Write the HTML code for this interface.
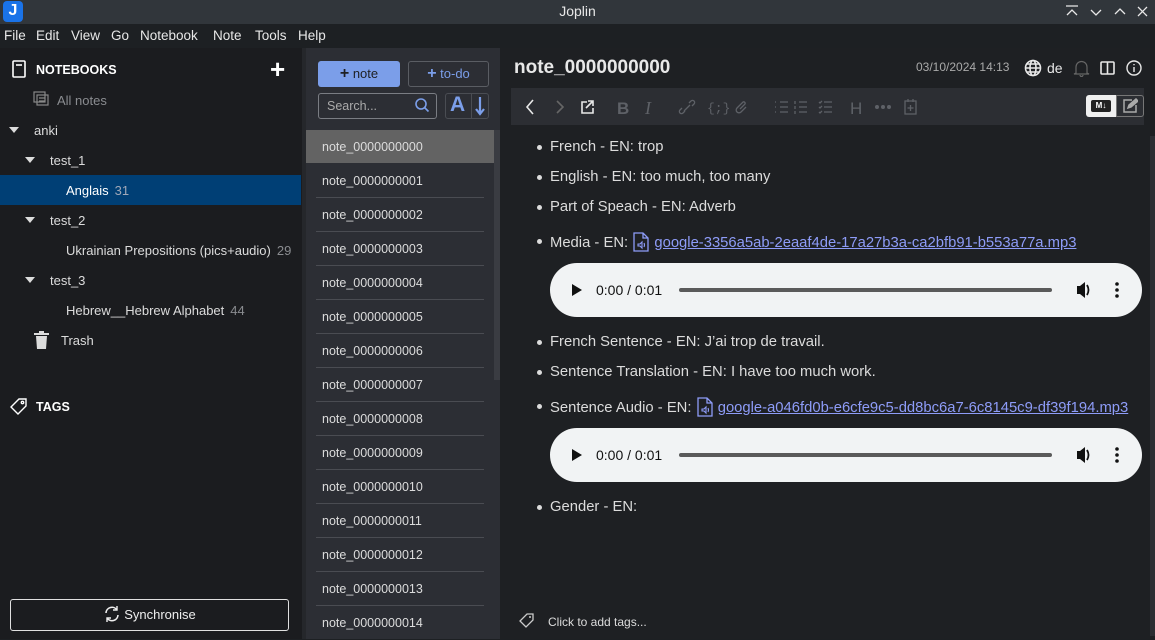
<!DOCTYPE html><html><head><style>
*{box-sizing:border-box;margin:0;padding:0}
body{width:1155px;height:639px;overflow:hidden;background:#1d2023;font-family:"Liberation Sans",sans-serif;position:relative;color:#dcdcdc}
.abs{position:absolute}
#title{left:0;top:0;width:1155px;height:24px;background:#31363b;color:#e8e8e8;font-size:14px;text-align:center;line-height:22px}
#menu{left:0;top:24px;width:1155px;height:24px;background:#1d2023;font-size:13.5px;color:#e8e8e8}
#menu span{position:absolute;top:4px}
#side{left:0;top:48px;width:302px;height:591px;background:#1b1c1f}
#gap{left:302px;top:48px;width:4px;height:591px;background:#25272b}
#list{left:306px;top:48px;width:194px;height:591px;background:#2c2e34}
#ed{left:500px;top:48px;width:655px;height:591px;background:#1e2023}
.si{position:absolute;font-size:13px;color:#dcdcdc}
.cnt{color:#8a8c90;margin-left:6px}
.tri{position:absolute;width:0;height:0;border-left:5px solid transparent;border-right:5px solid transparent;border-top:6px solid #dcdcdc}
.ni{position:absolute;left:10px;width:168px;height:34px;border-bottom:1px solid #4a4c52;font-size:12.5px;color:#dcdcdc;padding:10px 0 0 6px}
.bul{position:absolute;left:550px;font-size:14.8px;color:#dcdcdc;line-height:18px}
.bul:before{content:"";position:absolute;left:-13px;top:7px;width:5px;height:5px;border-radius:50%;background:#dcdcdc}
a{color:#8e9cf8;text-decoration:underline}
.audio{position:absolute;left:550px;width:592px;height:54px;border-radius:27px;background:#f1f3f4}
</style></head><body>
<div id="title" class="abs">Joplin
<div class="abs" style="left:3px;top:1px;width:20px;height:21px;border-radius:4px;background:#1a73e8;color:#fff;font-weight:bold;font-size:16px;line-height:20px">J</div>
<svg class="abs" style="left:1064px;top:4px" width="88" height="16" stroke="#e8e8e8" stroke-width="1.3" fill="none"><path d="M2 2h12M3 11l5-5 5 5"/><path d="M27 6l5 5 5-5"/><path d="M51 10l5-5 5 5"/><path d="M74 3l9 9M83 3l-9 9"/></svg>
</div>
<div id="menu" class="abs"><span style="left:4px">File</span><span style="left:36px">Edit</span><span style="left:71px">View</span><span style="left:111px">Go</span><span style="left:140px">Notebook</span><span style="left:213px">Note</span><span style="left:255px">Tools</span><span style="left:298px">Help</span></div>
<div id="side" class="abs">
<svg class="abs" style="left:12px;top:12px" width="14" height="18" stroke="#fff" stroke-width="1.6" fill="none"><rect x="1" y="1" width="12" height="16" rx="1"/><path d="M4 5h6"/></svg>
<div class="si" style="left:36px;top:15px;font-weight:bold;color:#fff;font-size:12.5px">NOTEBOOKS</div>
<div class="si" style="left:270px;top:6px;font-size:26px;font-weight:bold;color:#fff">+</div>
<svg class="abs" style="left:33px;top:43px" width="16" height="16" stroke="#888" stroke-width="1.2" fill="none"><rect x="1" y="1" width="11" height="10"/><rect x="4" y="4" width="11" height="10"/><path d="M6 7h6M6 10h6"/></svg>
<div class="si" style="left:57px;top:45px;color:#8a8c90">All notes</div>
<div class="tri" style="left:9px;top:79px"></div><div class="si" style="left:34px;top:75px">anki</div>
<div class="tri" style="left:25px;top:109px"></div><div class="si" style="left:50px;top:105px">test_1</div>
<div class="abs" style="left:0;top:127px;width:301px;height:30px;background:#003f75"></div>
<div class="si" style="left:66px;top:135px;color:#fff">Anglais<span class="cnt" style="color:#a0a8b8">31</span></div>
<div class="tri" style="left:25px;top:169px"></div><div class="si" style="left:50px;top:165px">test_2</div>
<div class="si" style="left:66px;top:195px">Ukrainian Prepositions (pics+audio)<span class="cnt">29</span></div>
<div class="tri" style="left:25px;top:229px"></div><div class="si" style="left:50px;top:225px">test_3</div>
<div class="si" style="left:66px;top:255px">Hebrew__Hebrew Alphabet<span class="cnt">44</span></div>
<svg class="abs" style="left:34px;top:283px" width="15" height="18" fill="#dcdcdc"><rect x="0" y="2" width="15" height="2"/><rect x="5" y="0" width="5" height="2"/><path d="M2 5h11l-1 13H3z"/></svg>
<div class="si" style="left:61px;top:285px">Trash</div>
<svg class="abs" style="left:10px;top:349px" width="18" height="18" stroke="#fff" stroke-width="1.4" fill="none"><path d="M9 2h7v7l-8 8-7-7z"/><circle cx="12.5" cy="5.5" r="1.2"/></svg>
<div class="si" style="left:36px;top:352px;font-weight:bold;color:#fff;font-size:12.5px">TAGS</div>
<div class="abs" style="left:10px;top:551px;width:279px;height:32px;border:1px solid #e0e0e0;border-radius:3px;text-align:center;font-size:13px;line-height:30px;color:#eee"><svg width="18" height="18" style="vertical-align:-4px;margin-right:3px" stroke="#eee" stroke-width="1.6" fill="none"><path d="M3 8a6 6 0 0 1 11-3M15 10a6 6 0 0 1-11 3"/><path d="M14 1v4h-4M4 17v-4h4" stroke-width="1.4"/></svg>Synchronise</div>
</div>
<div id="gap" class="abs"></div>
<div id="list" class="abs">
<div class="abs" style="left:12px;top:13px;width:82px;height:26px;background:#7b9ee9;border-radius:3px;color:#1e2023;font-size:13px;text-align:center;line-height:26px"><b style="font-size:16px">+</b> note</div>
<div class="abs" style="left:102px;top:13px;width:81px;height:26px;border:1px solid #5a5d63;border-radius:3px;color:#7b9ee9;font-size:13px;text-align:center;line-height:24px"><b style="font-size:16px">+</b> to-do</div>
<div class="abs" style="left:12px;top:45px;width:119px;height:26px;border:1px solid #7a7d83;border-radius:3px;color:#aaa;font-size:12.5px;padding:5px 8px">Search...</div>
<svg class="abs" style="left:108px;top:49px" width="16" height="16" stroke="#7b9ee9" stroke-width="1.6" fill="none"><circle cx="7" cy="7" r="5"/><path d="M10.5 10.5l4 4"/></svg>
<div class="abs" style="left:139px;top:45px;width:44px;height:26px;border:1px solid #4a4d53;border-radius:3px"></div>
<div class="abs" style="left:144px;top:45px;color:#7b9ee9;font-weight:bold;font-size:21px">A</div>
<div class="abs" style="left:165px;top:45px;width:1px;height:26px;background:#4a4d53"></div>
<svg class="abs" style="left:168px;top:48px" width="12" height="20" stroke="#7b9ee9" stroke-width="2.2" fill="none"><path d="M6 1v17M2 13l4 5 4-5"/></svg>
<div class="abs" style="left:0;top:82px;width:188px;height:33px;background:#636363"></div>
<div class="abs" style="left:188px;top:82px;width:6px;height:250px;background:#3a3c42"></div>
<div class="ni" style="top:82px;border:none">note_0000000000</div>
<div class="ni" style="top:116px">note_0000000001</div>
<div class="ni" style="top:150px">note_0000000002</div>
<div class="ni" style="top:184px">note_0000000003</div>
<div class="ni" style="top:218px">note_0000000004</div>
<div class="ni" style="top:252px">note_0000000005</div>
<div class="ni" style="top:286px">note_0000000006</div>
<div class="ni" style="top:320px">note_0000000007</div>
<div class="ni" style="top:354px">note_0000000008</div>
<div class="ni" style="top:388px">note_0000000009</div>
<div class="ni" style="top:422px">note_0000000010</div>
<div class="ni" style="top:456px">note_0000000011</div>
<div class="ni" style="top:490px">note_0000000012</div>
<div class="ni" style="top:524px">note_0000000013</div>
<div class="ni" style="top:558px;border:none">note_0000000014</div>
</div>
<div id="ed" class="abs">
<div class="abs" style="left:14px;top:9px;font-size:19px;font-weight:bold;color:#e8e8e8">note_0000000000</div>
<div class="abs" style="left:416px;top:12px;font-size:12px;color:#aaa">03/10/2024 14:13</div>
<svg class="abs" style="left:524px;top:11px" width="18" height="18" stroke="#e8e8e8" stroke-width="1.6" fill="none"><circle cx="9" cy="9" r="7.5"/><ellipse cx="9" cy="9" rx="3" ry="7.5"/><path d="M1.5 9h15M3 5h12M3 13h12"/></svg>
<div class="abs" style="left:547px;top:12px;font-size:14px;color:#e8e8e8">de</div>
<svg class="abs" style="left:573px;top:11px" width="17" height="18" stroke="#666" stroke-width="1.2" fill="none"><path d="M3 14V8a5.5 5.5 0 0 1 11 0v6l2 1H1zM7 16a1.5 1.5 0 0 0 3 0"/></svg>
<svg class="abs" style="left:600px;top:13px" width="15" height="14" stroke="#e8e8e8" stroke-width="1.6" fill="none"><rect x="1" y="1" width="13" height="12" rx="1"/><path d="M7.5 1v12"/></svg>
<svg class="abs" style="left:626px;top:12px" width="16" height="16" stroke="#e8e8e8" stroke-width="1.4" fill="none"><circle cx="8" cy="8" r="7"/><path d="M8 7v5M8 4v1.2"/></svg>
<div class="abs" style="left:11px;top:40px;width:633px;height:37px;background:#2c2e33"></div>
<svg class="abs" style="left:24px;top:49px" width="400" height="20" fill="none" stroke-width="1.6"><path d="M9 3L3 10l6 7" stroke="#e8e8e8"/><path d="M33 4l6 6-6 6" stroke="#666"/><path d="M63 5h-5v11h11v-5M64 4h5v5M69 4l-7 7" stroke="#e8e8e8"/><text x="93" y="17" fill="#5e6167" font-size="17" font-weight="bold" stroke="none" font-family="Liberation Sans">B</text><text x="121" y="17" fill="#5e6167" font-size="18" font-style="italic" stroke="none" font-family="Liberation Serif">I</text><path d="M160 14l6-6M158 11l-2 2a2 2 0 0 0 3 3l2-2M168 9l2-2a2 2 0 0 0-3-3l-2 2" stroke="#5e6167" stroke-width="1.3"/><text x="183" y="15" fill="#5e6167" font-size="13" stroke="none" font-family="Liberation Mono">{;}</text><path d="M222 10l-5 5a2.5 2.5 0 0 1-4-4l6-6a1.5 1.5 0 0 1 2 2l-5 5" stroke="#5e6167" stroke-width="1.3"/><path d="M256 5h8M256 10h8M256 15h8M251 5h1M251 10h1M251 15h1M275 5h8M275 10h8M275 15h8M271 4v3M271 9v3M271 14v3M300 5h8M300 10h8M300 15h8M295 5l1 1 2-2M295 10l1 1 2-2M295 15l1 1 2-2" stroke="#5e6167" stroke-width="1.3"/><text x="326" y="17" fill="#5e6167" font-size="17" stroke="none" font-family="Liberation Sans">H</text><circle cx="353" cy="10" r="2" fill="#5e6167" stroke="none"/><circle cx="359" cy="10" r="2" fill="#5e6167" stroke="none"/><circle cx="365" cy="10" r="2" fill="#5e6167" stroke="none"/><rect x="381" y="4" width="11" height="13" stroke="#5e6167" stroke-width="1.3"/><path d="M386.5 8v6M383.5 11h6M384 2v3M389 2v3" stroke="#5e6167" stroke-width="1.3"/></svg>
<div class="abs" style="left:586px;top:47px;width:30px;height:22px;background:#f0f0f0;border-radius:3px 0 0 3px"><div class="abs" style="left:5px;top:5px;width:20px;height:12px;background:#222;border-radius:2px;color:#fff;font-size:8px;font-weight:bold;text-align:center;line-height:12px">M↓</div></div>
<div class="abs" style="left:616px;top:47px;width:28px;height:22px;border:1px solid #777;border-radius:0 3px 3px 0"></div>
<svg class="abs" style="left:622px;top:50px" width="16" height="16" stroke="#aaa" stroke-width="1.5" fill="none"><path d="M10 2H2v12h12V7"/><path d="M6 10l1-3 7-6 2 2-7 6z" fill="#aaa"/></svg>
<div class="abs" style="left:650px;top:88px;width:5px;height:500px;background:#2c2e33"></div>
</div>
<div class="bul" style="top:138px">French - EN: trop</div>
<div class="bul" style="top:168px">English - EN: too much, too many</div>
<div class="bul" style="top:198px">Part of Speach - EN: Adverb</div>
<div class="bul" style="top:232px">Media - EN: <svg width="18" height="20" style="vertical-align:-5px" stroke="#8e9cf8" stroke-width="1.3" fill="none"><path d="M2 1h9l5 5v13H2zM11 1v5h5"/><path d="M6 12h2l2-2v6l-2-2H6zM12 11q1 2 0 4" stroke-width="1.1"/></svg> <a>google-3356a5ab-2eaaf4de-17a27b3a-ca2bfb91-b553a77a.mp3</a></div>
<div class="audio" style="top:263px"></div>
<div class="bul" style="top:333px">French Sentence - EN: J’ai trop de travail.</div>
<div class="bul" style="top:363px">Sentence Translation - EN: I have too much work.</div>
<div class="bul" style="top:397px">Sentence Audio - EN: <svg width="18" height="20" style="vertical-align:-5px" stroke="#8e9cf8" stroke-width="1.3" fill="none"><path d="M2 1h9l5 5v13H2zM11 1v5h5"/><path d="M6 12h2l2-2v6l-2-2H6zM12 11q1 2 0 4" stroke-width="1.1"/></svg> <a>google-a046fd0b-e6cfe9c5-dd8bc6a7-6c8145c9-df39f194.mp3</a></div>
<div class="audio" style="top:428px"></div>
<div class="bul" style="top:498px">Gender - EN:</div>
<svg class="abs" style="left:0;top:0" width="1155" height="639">
<g id="ac"><path d="M572 284l10 6-10 6z" fill="#111"/><text x="596" y="295" font-size="14" fill="#111" font-family="Liberation Sans">0:00 / 0:01</text><rect x="679" y="288" width="373" height="4" rx="2" fill="#5a5a5a"/><path d="M1077 286h3l5-4v16l-5-4h-3z" fill="#111"/><path d="M1087 285q3 5 0 10" stroke="#111" stroke-width="1.8" fill="none"/><circle cx="1117" cy="284" r="1.8" fill="#111"/><circle cx="1117" cy="290" r="1.8" fill="#111"/><circle cx="1117" cy="296" r="1.8" fill="#111"/></g>
<use href="#ac" y="165"/>
<path d="M527 614h6v6l-7 7-6-6z" stroke="#ccc" stroke-width="1.3" fill="none"/><circle cx="530" cy="617" r="1" fill="#ccc"/>
<text x="548" y="626" font-size="12" fill="#dcdcdc" font-family="Liberation Sans">Click to add tags...</text>
</svg>
</body></html>
